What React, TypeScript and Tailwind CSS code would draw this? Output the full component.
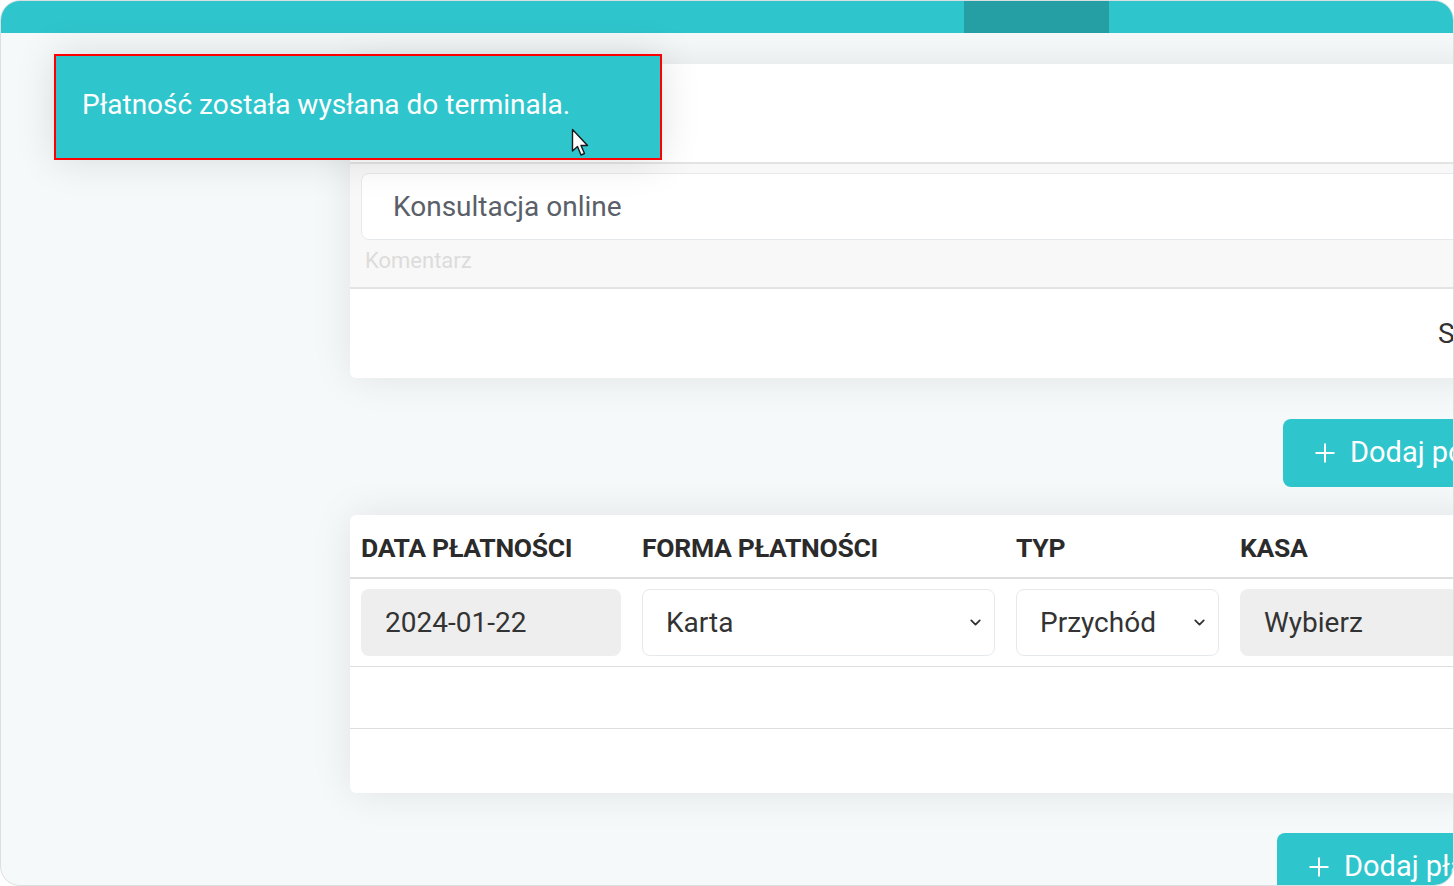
import React from 'react';
import { ChevronDown, Plus } from 'lucide-react';

const font = "font-['Roboto','Liberation_Sans',sans-serif]";

const columns = [
  { label: 'Data płatności', width: 'w-[260px]' },
  { label: 'Forma płatności', width: 'w-[353px]' },
  { label: 'Typ', width: 'w-[203px]' },
  { label: 'Kasa', width: 'w-[260px]' },
];

const Cursor = () => (
  <svg width="20" height="30" viewBox="0 0 20 30" className="absolute left-[515px] top-[72px]">
    <path d="M1.5 1.5 L1.5 23 L6.5 18.5 L10 27 L13.5 25.5 L10 17.5 L16.5 17.5 Z" fill="#ffffff" stroke="#1a1a1a" strokeWidth="1.4" strokeLinejoin="round" />
  </svg>
);

function Select({ value, width }: { value: string; width: string }) {
  return (
    <div className={`${width} h-[67px] shrink-0 flex items-center justify-between pl-[23px] pr-[10px] bg-white border border-[#e6e9eb] rounded-[8px] text-[28px] text-[#333]`}>
      <span>{value}</span>
      <ChevronDown size={17} strokeWidth={2.6} color="#333" />
    </div>
  );
}

export default function App() {
  return (
    <div className={`${font} relative w-[1454px] h-[886px] overflow-hidden rounded-[20px] border border-[#dcdfe1] bg-[#f5f9fa]`}>
      <div className="flex h-[32px] bg-[#2fc5cc]">
        <div className="w-[963px]" />
        <div className="w-[145px] bg-[#259ea4]" />
      </div>

      <div className="w-[1700px] pl-[349px] pt-[31px] flex flex-col">
        <div className="bg-white rounded-[6px] shadow-[0_0_40px_rgba(0,0,0,0.09)] flex flex-col">
          <div className="h-[98px]" />
          <div className="border-t-2 border-b-2 border-[#e3e3e3] bg-[#f8f8f8] px-[11px] pt-[9px] h-[127px]">
            <div className="h-[67px] flex items-center pl-[31px] bg-white border border-[#e6e9eb] rounded-[8px] text-[28px] text-[#5a6068]">
              Konsultacja online
            </div>
            <div className="pl-[4px] pt-[4px] text-[22px] text-[#dcdcdc]">Komentarz</div>
          </div>
          <div className="h-[89px] flex items-center pl-[1088px] text-[28px] text-[#333]">S</div>
        </div>

        <div className="pt-[41px] pl-[933px]">
          <div className="inline-flex items-center gap-[10px] h-[68px] pl-[27px] pr-[30px] rounded-[8px] bg-[#2fc5cc] text-white text-[29px]">
            <Plus size={30} strokeWidth={1.6} />
            <span>Dodaj pozycję</span>
          </div>
        </div>

        <div className="mt-[28px] bg-white rounded-[6px] shadow-[0_0_40px_rgba(0,0,0,0.09)] flex flex-col">
          <div className="h-[62px] flex items-center gap-[21px] pl-[11px] pt-[3px] text-[26.5px] font-bold uppercase text-[#2b2b2b] tracking-[-0.3px]">
            {columns.map((c) => (
              <div key={c.label} className={`${c.width} shrink-0`}>{c.label}</div>
            ))}
          </div>
          <div className="border-t-2 border-b border-[#dedede] h-[90px] flex items-center gap-[21px] pl-[11px]">
            <div className="w-[260px] h-[67px] shrink-0 flex items-center pl-[24px] bg-[#eeeeee] rounded-[8px] text-[28px] text-[#333]">
              2024-01-22
            </div>
            <Select value="Karta" width="w-[353px]" />
            <Select value="Przychód" width="w-[203px]" />
            <div className="w-[260px] h-[67px] shrink-0 flex items-center pl-[24px] bg-[#eeeeee] rounded-[8px] text-[28px] text-[#333]">
              Wybierz
            </div>
          </div>
          <div className="h-[62px] border-b border-[#dedede]" />
          <div className="h-[64px]" />
        </div>

        <div className="pt-[40px] pl-[927px]">
          <div className="inline-flex items-center gap-[10px] h-[68px] pl-[27px] pr-[30px] rounded-[8px] bg-[#2fc5cc] text-white text-[29px]">
            <Plus size={30} strokeWidth={1.6} />
            <span>Dodaj płatność</span>
          </div>
        </div>
      </div>

      <div className="absolute left-[53px] top-[53px] w-[608px] h-[106px] bg-[#2fc5cc] border-2 border-[#ff0000] shadow-[0_0_40px_rgba(0,0,0,0.12)] flex items-center pl-[26px] pb-[4px] text-white text-[28px]">
        Płatność została wysłana do terminala.
        <Cursor />
      </div>
    </div>
  );
}
